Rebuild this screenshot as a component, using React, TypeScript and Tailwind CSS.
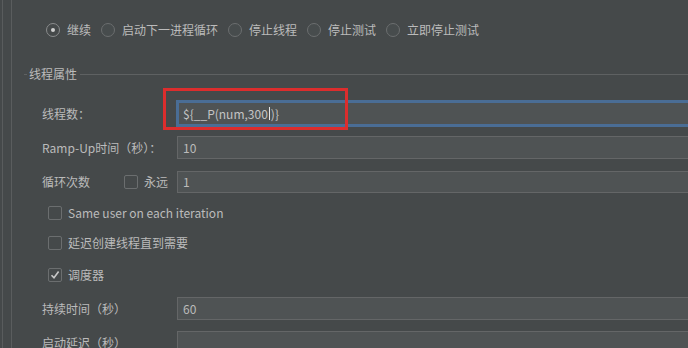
import React from "react";

const font = { fontFamily: '"Noto Sans CJK SC", "Noto Sans", sans-serif' };

function Radio({ label, checked }: { label: string; checked?: boolean }) {
  return (
    <div className="flex items-center mr-[10px]">
      <div
        className={
          "w-[14px] h-[14px] rounded-full border flex items-center justify-center " +
          (checked ? "border-[#8a8c8d] bg-[#45494a]" : "border-[#6b6e6f] bg-[#474c4d]")
        }
      >
        {checked && <div className="w-[4px] h-[4px] rounded-full bg-[#d0d0d0]" />}
      </div>
      <span className="ml-[7px] text-[12px] text-[#bbbbbb] leading-none">{label}</span>
    </div>
  );
}

function Check({ checked }: { checked?: boolean }) {
  return (
    <div className="w-[14px] h-[14px] rounded-[2px] border border-[#6b6e6f] bg-[#45494a] flex items-center justify-center shrink-0">
      {checked && (
        <svg width="10" height="10" viewBox="0 0 10 10">
          <path d="M1.5 5.2 L4 7.8 L8.6 1.6" fill="none" stroke="#c8c8c8" strokeWidth="1.6" />
        </svg>
      )}
    </div>
  );
}

function Field({ value, h }: { value?: string; h: string }) {
  return (
    <div
      className={
        "flex-1 -mr-[6px] border border-[#646667] bg-[#4f5354] flex items-center pl-[5px] text-[12px] text-[#bbbbbb] " +
        h
      }
    >
      {value}
    </div>
  );
}

export default function App() {
  return (
    <div
      className="relative w-[688px] h-[348px] overflow-hidden bg-[#45494a] flex"
      style={font}
    >
      <div className="w-[2px] shrink-0" />
      <div className="w-[1px] shrink-0 bg-[#595c5d]" />
      <div className="w-[8px] shrink-0" />
      <div className="w-[1px] shrink-0 bg-[#5a5d5e]" />
      <div className="flex-1 flex flex-col">
        {/* radio row */}
        <div className="shrink-0 mt-[23px] h-[14px] flex items-center pl-[34px]">
          <Radio label="继续" checked />
          <Radio label="启动下一进程循环" />
          <Radio label="停止线程" />
          <Radio label="停止测试" />
          <Radio label="立即停止测试" />
        </div>

        {/* separator */}
        <div className="shrink-0 mt-[29px] h-[16px] flex items-center">
          <div className="ml-[12px] w-[3px] h-px bg-[#5e6162]" />
          <span className="ml-[2px] text-[12px] text-[#bbbbbb] leading-none">线程属性</span>
          <div className="ml-[3px] flex-1 h-px bg-[#5e6162]" />
        </div>

        {/* 线程数 */}
        <div className="shrink-0 mt-[18px] h-[27px] flex items-center">
          <div className="w-[164px] pl-[30px] text-[12px] text-[#bbbbbb]">线程数：</div>
          <div className="flex-1 -mr-[6px] h-[27px] border-[3px] border-[#4a6d95] bg-[#4f5354] flex items-center pl-[4px] text-[12px] text-[#c4c4c4]">
            <span>{"${__P(num,300"}</span>
            <span className="w-px h-[13px] bg-[#e6e6e6] mx-[1px]" />
            <span>{")}"}</span>
          </div>
        </div>

        {/* Ramp-Up */}
        <div className="shrink-0 mt-[9px] h-[23px] flex items-center">
          <div className="w-[165px] pl-[30px] text-[12px] text-[#bbbbbb]">Ramp-Up时间（秒）：</div>
          <Field value="10" h="h-[23px]" />
        </div>

        {/* 循环次数 */}
        <div className="shrink-0 mt-[12px] h-[22px] flex items-center">
          <div className="w-[165px] pl-[30px] flex items-center text-[12px] text-[#bbbbbb]">
            <span>循环次数</span>
            <div className="ml-[34px]">
              <Check />
            </div>
            <span className="ml-[6px]">永远</span>
          </div>
          <Field value="1" h="h-[22px]" />
        </div>

        {/* checkboxes */}
        <div className="shrink-0 mt-[8px] h-[24px] flex items-center pl-[36px]">
          <Check />
          <span className="ml-[6px] text-[12px] text-[#bbbbbb]">Same user on each iteration</span>
        </div>
        <div className="shrink-0 mt-[6px] h-[24px] flex items-center pl-[36px]">
          <Check />
          <span className="ml-[6px] text-[12px] text-[#bbbbbb]">延迟创建线程直到需要</span>
        </div>
        <div className="shrink-0 mt-[8px] h-[24px] flex items-center pl-[36px]">
          <Check checked />
          <span className="ml-[6px] text-[12px] text-[#bbbbbb]">调度器</span>
        </div>

        {/* 持续时间 */}
        <div className="shrink-0 mt-[10px] h-[23px] flex items-center">
          <div className="w-[165px] pl-[30px] text-[12px] text-[#bbbbbb]">持续时间（秒）</div>
          <Field value="60" h="h-[23px]" />
        </div>

        {/* 启动延迟 */}
        <div className="shrink-0 mt-[11px] h-[23px] flex items-center">
          <div className="w-[165px] pl-[30px] text-[12px] text-[#bbbbbb]">启动延迟（秒）</div>
          <Field h="h-[23px]" />
        </div>
      </div>

      {/* red annotation box */}
      <div className="absolute left-[163px] top-[88px] w-[185px] h-[42px] border-[3px] border-[#dc2d2d] pointer-events-none" />
    </div>
  );
}
